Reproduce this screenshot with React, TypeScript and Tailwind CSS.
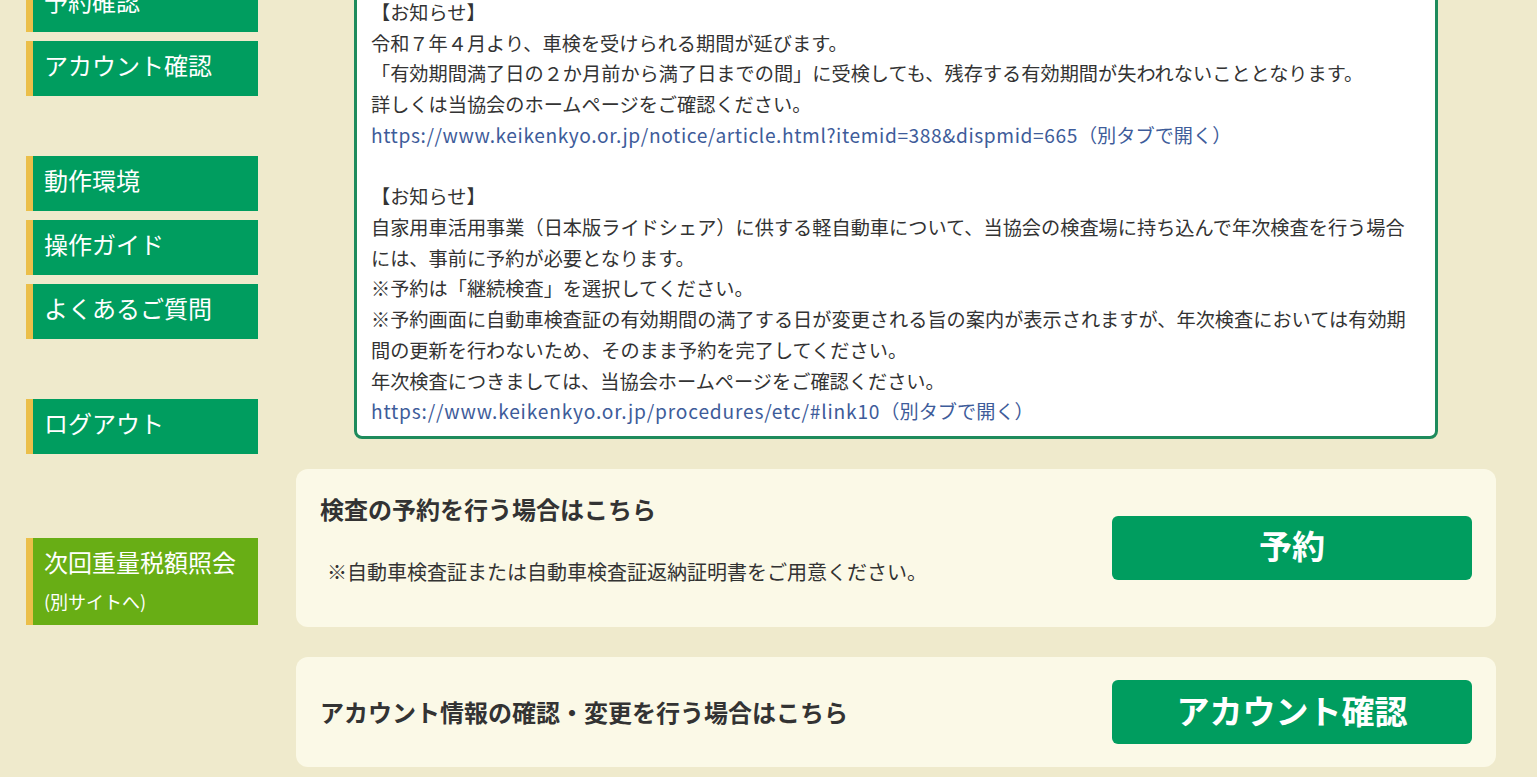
import React from 'react';

const FONT = { fontFamily: '"Noto Sans CJK JP", "Noto Sans", sans-serif' };

type NavItem = { label: string; sub?: string; lime?: boolean; gapBefore?: string };

const NAV: NavItem[] = [
  { label: '予約確認' },
  { label: 'アカウント確認', gapBefore: 'mt-[9px]' },
  { label: '動作環境', gapBefore: 'mt-[60px]' },
  { label: '操作ガイド', gapBefore: 'mt-[9px]' },
  { label: 'よくあるご質問', gapBefore: 'mt-[9px]' },
  { label: 'ログアウト', gapBefore: 'mt-[60px]' },
  { label: '次回重量税額照会', sub: '(別サイトへ)', lime: true, gapBefore: 'mt-[84px]' },
];

const LINK = 'text-[#3e5c9a] hover:underline';

const App: React.FC = () => {
  return (
    <div className="min-h-screen bg-[#efeacc] text-[#333] overflow-hidden" style={FONT}>
      <div className="flex pl-[26px]">
        {/* Side menu */}
        <nav className="w-[232px] shrink-0 flex flex-col -mt-[23px]">
          {NAV.map(item => (
            <a
              key={item.label}
              href="#"
              className={`${item.gapBefore ?? ''} block border-l-[7px] border-[#ebbf4a] pl-[11px] text-white ${
                item.lime ? 'bg-[#68ae15] h-[87px]' : 'bg-[#009d5f] h-[55px]'
              } pt-[6px]`}
            >
              <span className="block text-[24px] leading-[36px]">{item.label}</span>
              {item.sub && <span className="block text-[18px] leading-[42px]">{item.sub}</span>}
            </a>
          ))}
        </nav>

        {/* Main */}
        <main className="ml-[38px] w-[1200px] shrink-0 flex flex-col">
          {/* Notices */}
          <div className="mx-[58px] -mt-[15px] bg-white border-[3px] border-[#1e8b5c] rounded-lg px-[14px] py-[9px] text-[19.2px] leading-[30.72px]">
            <p>【お知らせ】</p>
            <p>令和７年４月より、車検を受けられる期間が延びます。</p>
            <p>「有効期間満了日の２か月前から満了日までの間」に受検しても、残存する有効期間が失われないこととなります。</p>
            <p>詳しくは当協会のホームページをご確認ください。</p>
            <p>
              <a href="#" className={LINK}>
                <span className="tracking-[0.58px]">https://www.keikenkyo.or.jp/notice/article.html?itemid=388&amp;dispmid=665</span>（別タブで開く）
              </a>
            </p>
            <p>&nbsp;</p>
            <p>【お知らせ】</p>
            <p>
              自家用車活用事業（日本版ライドシェア）に供する軽自動車について、当協会の検査場に持ち込んで年次検査を行う場合には、事前に予約が必要となります。
            </p>
            <p>※予約は「継続検査」を選択してください。</p>
            <p>
              ※予約画面に自動車検査証の有効期間の満了する日が変更される旨の案内が表示されますが、年次検査においては有効期間の更新を行わないため、そのまま予約を完了してください。
            </p>
            <p>年次検査につきましては、当協会ホームページをご確認ください。</p>
            <p>
              <a href="#" className={LINK}>
                <span className="tracking-[0.8px]">https://www.keikenkyo.or.jp/procedures/etc/#link10</span>（別タブで開く）
              </a>
            </p>
          </div>

          {/* Reservation */}
          <section className="mt-[30px] bg-[#fbf9e7] rounded-xl p-6 flex items-center justify-between">
            <div>
              <h3 className="text-[24px] leading-[32px] font-bold">検査の予約を行う場合はこちら</h3>
              <p className="mt-[32px] mb-[16px] ml-[7px] text-[20px] leading-[30px]">
                ※自動車検査証または自動車検査証返納証明書をご用意ください。
              </p>
            </div>
            <button className="w-[360px] h-[64px] pb-[6px] rounded-md bg-[#009d5f] text-white text-[33px] font-bold leading-none">
              予約
            </button>
          </section>

          {/* Account */}
          <section className="mt-[30px] bg-[#fbf9e7] rounded-xl px-6 py-[23px] flex items-center justify-between">
            <h3 className="text-[24px] leading-[32px] font-bold">アカウント情報の確認・変更を行う場合はこちら</h3>
            <button className="w-[360px] h-[64px] pb-[4px] rounded-md bg-[#009d5f] text-white text-[33px] font-bold leading-none">
              アカウント確認
            </button>
          </section>
          <div className="h-[40px]" />
        </main>
      </div>
    </div>
  );
};

export default App;
